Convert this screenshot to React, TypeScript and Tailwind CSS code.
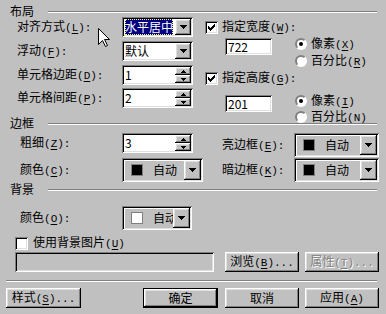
import React from "react";

const SUNKEN =
  "[box-shadow:inset_1px_1px_#808080,inset_-1px_-1px_#fff,inset_2px_2px_#000,inset_-2px_-2px_#dfdfdf]";
const RAISED =
  "[box-shadow:inset_-1px_-1px_#000,inset_1px_1px_#fff,inset_-2px_-2px_#808080,inset_2px_2px_#dfdfdf]";

function Lbl({ t, k, colon = true, dots = false }: { t: string; k: string; colon?: boolean; dots?: boolean }) {
  return (
    <span className="whitespace-nowrap">
      {t}
      <span className="font-['Liberation_Mono',monospace] text-[11px]">
        (<u className="underline-offset-2">{k}</u>){colon ? ":" : ""}
        {dots ? "..." : ""}
      </span>
    </span>
  );
}

function DropBtn({ wide = false }: { wide?: boolean }) {
  return (
    <div
      className={`flex shrink-0 items-center justify-center bg-[#c0c0c0] ${wide ? "w-[17px]" : "w-[16px]"} ${RAISED}`}
    >
      <svg width="7" height="4" viewBox="0 0 7 4" shapeRendering="crispEdges">
        <path d="M0 0h7v1h-1v1h-1v1h-1v1h-1v-1h-1v-1h-1v-1h-1z" fill="#000" />
      </svg>
    </div>
  );
}

function Select({ children }: { children: React.ReactNode }) {
  return (
    <div className={`flex h-[20px] w-[71px] bg-white p-[2px] ${SUNKEN}`}>
      <div className="flex min-w-0 flex-1 items-center overflow-hidden">{children}</div>
      <DropBtn />
    </div>
  );
}

function SpinBtn({ up }: { up?: boolean }) {
  return (
    <div className={`flex h-[8px] items-center justify-center bg-[#c0c0c0] ${RAISED}`}>
      <svg width="5" height="3" viewBox="0 0 5 3" shapeRendering="crispEdges">
        <path
          d={up ? "M2 0h1v1h1v1h1v1h-5v-1h1v-1h1z" : "M0 0h5v1h-1v1h-1v1h-1v-1h-1v-1h-1z"}
          fill="#000"
        />
      </svg>
    </div>
  );
}

function Spin({ value }: { value: string }) {
  return (
    <div className={`flex h-[20px] w-[71px] bg-white p-[2px] ${SUNKEN}`}>
      <div className="flex flex-1 items-center pl-[1px]">{value}</div>
      <div className="flex w-[16px] flex-col">
        <SpinBtn up />
        <SpinBtn />
      </div>
    </div>
  );
}

function ColorDrop({ width, white = false }: { width: string; white?: boolean }) {
  return (
    <div className={`flex h-[24px] bg-[#c0c0c0] p-[2px] ${width} ${SUNKEN}`}>
      <div className="flex min-w-0 flex-1 items-center overflow-hidden [box-shadow:inset_1px_1px_#fff]">
        <div
          className={`ml-[7px] h-[12px] w-[12px] shrink-0 border border-[#808080] ${white ? "bg-white" : "bg-black"}`}
        />
        <span className="ml-[10px] whitespace-nowrap">自动</span>
      </div>
      <DropBtn wide />
    </div>
  );
}

function Check() {
  return (
    <div className={`flex h-[13px] w-[13px] shrink-0 items-center justify-center bg-white ${SUNKEN}`}>
      <svg width="7" height="7" viewBox="0 0 7 7" shapeRendering="crispEdges">
        <path
          d="M6 0h1v3h-1v1h-1v1h-1v1h-1v1h-1v-1h-1v-1h-1v-3h1v1h1v1h1v-1h1v-1h1z"
          fill="#000"
        />
      </svg>
    </div>
  );
}

function Box() {
  return <div className={`h-[13px] w-[13px] shrink-0 bg-white ${SUNKEN}`} />;
}

function Radio({ on, children }: { on?: boolean; children: React.ReactNode }) {
  return (
    <div className="flex h-[12px] items-center">
      <div className="flex h-[12px] w-[12px] shrink-0 items-center justify-center rounded-full border-2 border-t-[#808080] border-l-[#808080] border-r-white border-b-white bg-white">
        {on && <div className="h-[4px] w-[4px] rounded-full bg-black" />}
      </div>
      <span className="ml-[4px]">{children}</span>
    </div>
  );
}

function Header({ children }: { children: React.ReactNode }) {
  return (
    <div className="flex h-[12px] items-center pl-[10px] pr-[9px]">
      <span>{children}</span>
      <div className="ml-[14px] mt-[2px] h-[2px] flex-1 border-t border-b border-t-[#808080] border-b-white" />
    </div>
  );
}

function Btn({
  children,
  width,
  def = false,
  off = false,
}: {
  children: React.ReactNode;
  width: string;
  def?: boolean;
  off?: boolean;
}) {
  return (
    <div
      className={`flex h-[20px] items-center justify-center bg-[#c0c0c0] ${width} ${RAISED} ${
        def ? "border border-black" : ""
      } ${off ? "text-[#808080] [text-shadow:1px_1px_0_#fff]" : ""}`}
    >
      {children}
    </div>
  );
}

export default function App() {
  return (
    <div className="relative h-[314px] w-[386px] overflow-hidden bg-[#c0c0c0] pt-[5px] font-['Noto_Sans_CJK_SC',sans-serif] text-[12px] leading-[12px] text-black">
      {/* 布局 */}
      <Header>布局</Header>
      <div className="flex h-[100px]">
        <div className="flex w-[205px] shrink-0 flex-col pl-[17px]">
          <div className="flex h-[20px] items-center">
            <div className="w-[105px]">
              <Lbl t="对齐方式" k="L" />
            </div>
            <Select>
              <div className="mx-[1px] flex h-full items-center whitespace-nowrap bg-[#000080] text-white outline outline-1 -outline-offset-1 outline-dotted outline-[#ffff80]">
                水平居中
              </div>
            </Select>
          </div>
          <div className="mt-[4px] flex h-[20px] items-center">
            <div className="w-[105px]">
              <Lbl t="浮动" k="F" />
            </div>
            <Select>
              <span className="pl-[1px]">默认</span>
            </Select>
          </div>
          <div className="mt-[4px] flex h-[20px] items-center">
            <div className="w-[105px]">
              <Lbl t="单元格边距" k="D" />
            </div>
            <Spin value="1" />
          </div>
          <div className="mt-[3px] flex h-[20px] items-center">
            <div className="w-[105px]">
              <Lbl t="单元格间距" k="P" />
            </div>
            <Spin value="2" />
          </div>
        </div>

        <div className="flex flex-col">
          <div className="mt-[3px] flex items-center">
            <Check />
            <span className="ml-[4px]">
              <Lbl t="指定宽度" k="W" />
            </span>
          </div>
          <div className="mt-[4px] flex">
            <div className={`ml-[20px] flex h-[17px] w-[47px] items-center bg-white pl-[3px] ${SUNKEN}`}>722</div>
            <div className="ml-[23px] flex flex-col">
              <Radio on>
                <Lbl t="像素" k="X" colon={false} />
              </Radio>
              <div className="mt-[5px]">
                <Radio>
                  <Lbl t="百分比" k="R" colon={false} />
                </Radio>
              </div>
            </div>
          </div>
          <div className="mt-[4px] flex items-center">
            <Check />
            <span className="ml-[4px]">
              <Lbl t="指定高度" k="G" />
            </span>
          </div>
          <div className="mt-[10px] flex">
            <div className={`ml-[20px] flex h-[17px] w-[47px] items-center bg-white pl-[3px] ${SUNKEN}`}>201</div>
            <div className="ml-[23px] flex flex-col">
              <Radio on>
                <Lbl t="像素" k="I" colon={false} />
              </Radio>
              <div className="mt-[4px]">
                <Radio>
                  <Lbl t="百分比" k="N" colon={false} />
                </Radio>
              </div>
            </div>
          </div>
        </div>
      </div>

      {/* 边框 */}
      <Header>边框</Header>
      <div className="mt-[4px] flex h-[25px] items-start">
        <div className="flex w-[205px] shrink-0 items-center pl-[20px]">
          <div className="w-[102px]">
            <Lbl t="粗细" k="Z" />
          </div>
          <Spin value="3" />
        </div>
        <div className="flex h-[24px] items-center pl-[17px]">
          <div className="w-[72px]">
            <Lbl t="亮边框" k="E" />
          </div>
          <ColorDrop width="w-[85px]" />
        </div>
      </div>
      <div className="flex h-[24px] items-start">
        <div className="flex h-[24px] w-[205px] shrink-0 items-center pl-[20px]">
          <div className="w-[102px]">
            <Lbl t="颜色" k="C" />
          </div>
          <ColorDrop width="w-[81px]" />
        </div>
        <div className="flex h-[24px] items-center pl-[17px]">
          <div className="w-[72px]">
            <Lbl t="暗边框" k="K" />
          </div>
          <ColorDrop width="w-[85px]" />
        </div>
      </div>

      {/* 背景 */}
      <div className="mt-[1px]">
        <Header>背景</Header>
      </div>
      <div className="mt-[11px] flex h-[24px] items-center pl-[20px]">
        <div className="w-[102px]">
          <Lbl t="颜色" k="O" />
        </div>
        <ColorDrop width="w-[70px]" white />
      </div>
      <div className="mt-[6px] flex items-center pl-[15px]">
        <Box />
        <span className="ml-[5px]">
          <Lbl t="使用背景图片" k="U" colon={false} />
        </span>
      </div>
      <div className="mt-[2px] flex h-[20px] pl-[15px]">
        <div className={`h-[20px] w-[199px] bg-[#c0c0c0] ${SUNKEN}`} />
        <div className="ml-[11px]">
          <Btn width="w-[74px]">
            <Lbl t="浏览" k="B" colon={false} dots />
          </Btn>
        </div>
        <div className="ml-[6px]">
          <Btn width="w-[74px]" off>
            <Lbl t="属性" k="T" colon={false} dots />
          </Btn>
        </div>
      </div>

      <div className="ml-[6px] mr-[9px] mt-[8px] h-[2px] border-t border-b border-t-[#808080] border-b-white" />

      <div className="mt-[6px] flex pl-[6px]">
        <Btn width="w-[75px]">
          <Lbl t="样式" k="S" colon={false} dots />
        </Btn>
        <div className="ml-[62px]">
          <Btn width="w-[75px]" def>
            确定
          </Btn>
        </div>
        <div className="ml-[7px]">
          <Btn width="w-[74px]">取消</Btn>
        </div>
        <div className="ml-[6px]">
          <Btn width="w-[74px]">
            <Lbl t="应用" k="A" colon={false} />
          </Btn>
        </div>
      </div>

      {/* mouse pointer */}
      <svg className="absolute left-[98px] top-[28px]" width="13" height="20" viewBox="0 0 13 20">
        <path
          d="M0.5 0.5V16.5L4.5 12.5L7.5 18.5L9.5 17.5L6.5 11.5H11.5Z"
          fill="#fff"
          stroke="#000"
          strokeWidth="1"
          strokeLinejoin="miter"
        />
      </svg>
    </div>
  );
}
